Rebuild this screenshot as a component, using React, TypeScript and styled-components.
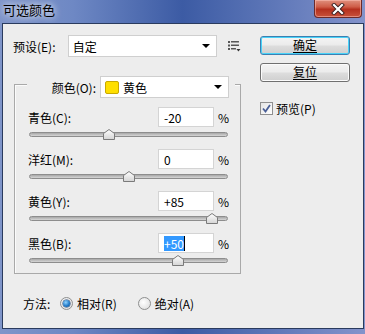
import styled, { createGlobalStyle, css } from 'styled-components';

const GlobalStyle = createGlobalStyle`
  html, body {
    margin: 0;
    padding: 0;
    background: #ffffff;
  }
  body {
    font-family: 'Noto Sans CJK SC', 'Noto Sans', sans-serif;
    font-size: 12px;
    color: #000;
  }
`;

const Window = styled.div`
  width: 365px;
  height: 334px;
  display: flex;
  flex-direction: column;
  background: linear-gradient(90deg, #7f95c9 0%, #6e88c4 20%, #3c5ba4 50%, #5e77b8 75%, #8393cb 100%);
  overflow: hidden;
`;

const TitleBar = styled.div`
  height: 23px;
  display: flex;
  align-items: flex-start;
  justify-content: space-between;
  padding-left: 3px;
  padding-right: 2px;
`;

const Title = styled.div`
  font-size: 13px;
  line-height: 20px;
  color: #000;
  text-shadow: 0 0 6px rgba(255, 255, 255, 0.9), 0 0 10px rgba(255, 255, 255, 0.6);
`;

const CloseButton = styled.div`
  width: 46px;
  height: 17px;
  margin-right: 1px;
  display: flex;
  align-items: center;
  justify-content: center;
  border: 1px solid #6b2a2a;
  border-top: none;
  border-radius: 0 0 4px 4px;
  background: linear-gradient(#e0907e 0%, #cf5d48 40%, #b5301e 55%, #c8523b 100%);
  box-shadow: inset 0 0 0 1px rgba(255, 200, 190, 0.5);
`;

const Frame = styled.div`
  flex: 1;
  padding: 0 1px 5px 2px;
  display: flex;
`;

const Client = styled.div`
  flex: 1;
  border: 1px solid #2a3b5e;
  background: #ededed;
  display: flex;
  padding: 11px 0 0 10px;
`;

const Main = styled.div`
  width: 228px;
  display: flex;
  flex-direction: column;
`;

const PresetRow = styled.div`
  display: flex;
  align-items: center;
  height: 22px;
`;

const PresetLabel = styled.span`
  width: 55px;
`;

const Select = styled.div<{ $width: number }>`
  width: ${(p) => p.$width}px;
  height: 22px;
  box-sizing: border-box;
  background: #fff;
  border: 1px solid #cfcfcf;
  display: flex;
  align-items: center;
  padding: 0 4px 0 4px;
  gap: 2px;
`;

const SelectText = styled.span`
  flex: 1;
`;

const Arrow = styled.span`
  width: 0;
  height: 0;
  border-left: 4px solid transparent;
  border-right: 4px solid transparent;
  border-top: 4px solid #000;
  margin-right: 2px;
`;

const MenuIcon = styled.svg`
  margin-left: 11px;
`;

const Group = styled.div`
  margin: 27px 0 0 1px;
  width: 227px;
  box-sizing: border-box;
  border: 1px solid #a9a9a9;
  box-shadow: inset 1px 1px 0 #fbfbfb;
  padding: 0 11px 0 13px;
`;

const GroupHead = styled.div`
  display: flex;
  align-items: center;
  width: fit-content;
  margin: -9px 0 9px -1px;
  padding-right: 6px;
  background: #ededed;
`;

const HeadLabel = styled.span`
  width: 69px;
  padding-right: 4px;
  text-align: right;
`;

const Swatch = styled.span`
  width: 14px;
  height: 13px;
  box-sizing: border-box;
  background: #ffdf00;
  border: 1px solid #c9a900;
  border-radius: 2px;
  margin-right: 2px;
`;

const InkRow = styled.div`
  display: flex;
  flex-direction: column;
  & + & {
    margin-top: 2px;
  }
`;

const InkLine = styled.div`
  display: grid;
  grid-template-columns: 126px 56px auto;
  column-gap: 4px;
  align-items: center;
  height: 20px;
`;

const Field = styled.div`
  height: 20px;
  box-sizing: border-box;
  background: #fff;
  border: 1px solid #d4d4d4;
  padding-left: 5px;
  display: flex;
  align-items: center;
`;

const Selected = styled.span`
  background: #3399ff;
  color: #fff;
  border-right: 1px solid #000;
  line-height: 15px;
`;

const SliderArea = styled.div`
  height: 20px;
  padding-top: 5px;
  box-sizing: border-box;
`;

const Track = styled.div`
  position: relative;
  margin-left: 1px;
  width: 199px;
  height: 5px;
  box-sizing: border-box;
  border: 1px solid #8d8d8d;
  border-radius: 3px;
  background: linear-gradient(#a7a7a7, #d6d6d6);
`;

const Thumb = styled.svg`
  position: absolute;
  top: -4px;
  margin-left: -6px;
`;

const MethodRow = styled.div`
  display: flex;
  align-items: center;
  height: 16px;
  margin: 21px 0 0 10px;
`;

const MethodLabel = styled.span`
  width: 37px;
`;

const RadioItem = styled.span`
  display: flex;
  align-items: center;
  gap: 4px;
  & + & {
    margin-left: 21px;
  }
`;

const Radio = styled.span<{ $on?: boolean }>`
  width: 13px;
  height: 13px;
  box-sizing: border-box;
  border-radius: 50%;
  border: 1px solid #8e8f8f;
  background: radial-gradient(circle at 40% 40%, #ffffff, #d9d9d9);
  display: flex;
  align-items: center;
  justify-content: center;
  &::after {
    content: '';
    display: ${(p) => (p.$on ? 'block' : 'none')};
    width: 7px;
    height: 7px;
    border-radius: 50%;
    background: radial-gradient(circle at 40% 35%, #8fd3ff, #1b74c4 60%, #0d4d8c);
    box-shadow: 0 0 0 0.5px #1f3f6a;
  }
`;

const Side = styled.div`
  width: 90px;
  margin-left: 19px;
  padding-top: 1px;
  display: flex;
  flex-direction: column;
`;

const Button = styled.div<{ $default?: boolean }>`
  height: 19px;
  box-sizing: border-box;
  border: 1px solid #707070;
  border-radius: 3px;
  background: linear-gradient(#f4f4f4 0%, #ebebeb 48%, #dddddd 52%, #cfcfcf 100%);
  box-shadow: inset 0 0 0 1px #fbfbfb;
  display: flex;
  align-items: center;
  justify-content: center;
  line-height: 14px;
  & + & {
    margin-top: 8px;
  }
  ${(p) =>
    p.$default &&
    css`
      border-color: #3c7fb1;
      box-shadow: inset 0 0 0 1px #48d2f8;
    `}
`;

const ButtonText = styled.span`
  border-bottom: 1px solid #000;
`;

const CheckRow = styled.div`
  display: flex;
  align-items: center;
  gap: 3px;
  margin-top: 18px;
`;

const CheckBox = styled.span`
  width: 13px;
  height: 13px;
  box-sizing: border-box;
  border: 1px solid #8f8f8f;
  background: linear-gradient(135deg, #e4e4e4, #ffffff);
  display: flex;
  align-items: center;
  justify-content: center;
`;

const inks = [
  { label: '青色(C):', value: -20 },
  { label: '洋红(M):', value: 0 },
  { label: '黄色(Y):', value: 85 },
  { label: '黑色(B):', value: 50, selected: true },
];

const fmt = (v: number) => (v > 0 ? `+${v}` : `${v}`);

const App = () => {
  return (
    <Window>
      <GlobalStyle />
      <TitleBar>
        <Title>可选颜色</Title>
        <CloseButton>
          <svg width="14" height="12" viewBox="0 0 14 12">
            <path d="M3 2 L11 10 M11 2 L3 10" stroke="#3a2020" strokeWidth="4" strokeLinecap="square" />
            <path d="M3 2 L11 10 M11 2 L3 10" stroke="#ffffff" strokeWidth="2.2" strokeLinecap="square" />
          </svg>
        </CloseButton>
      </TitleBar>
      <Frame>
        <Client>
          <Main>
            <PresetRow>
              <PresetLabel>预设(E):</PresetLabel>
              <Select $width={150}>
                <SelectText>自定</SelectText>
                <Arrow />
              </Select>
              <MenuIcon width="13" height="12" viewBox="0 0 13 12">
                <rect x="0" y="1" width="2" height="2" fill="#555" />
                <rect x="3" y="1" width="8" height="1.5" fill="#555" />
                <rect x="0" y="4.5" width="2" height="2" fill="#555" />
                <rect x="3" y="4.5" width="8" height="1.5" fill="#555" />
                <rect x="0" y="8" width="2" height="2" fill="#555" />
                <rect x="3" y="8" width="5" height="1.5" fill="#555" />
                <path d="M8.5 9 L12.5 9 L10.5 11.5 Z" fill="#333" />
              </MenuIcon>
            </PresetRow>
            <Group>
              <GroupHead>
                <HeadLabel>颜色(O):</HeadLabel>
                <Select $width={129}>
                  <Swatch />
                  <SelectText>黄色</SelectText>
                  <Arrow />
                </Select>
              </GroupHead>
              {inks.map((ink) => (
                <InkRow key={ink.label}>
                  <InkLine>
                    <span>{ink.label}</span>
                    <Field>
                      {ink.selected ? <Selected>{fmt(ink.value)}</Selected> : fmt(ink.value)}
                    </Field>
                    <span>%</span>
                  </InkLine>
                  <SliderArea>
                    <Track>
                      <Thumb
                        width="12"
                        height="11"
                        viewBox="0 0 12 11"
                        style={{ left: `${((ink.value + 100) / 200) * 197}px` }}
                      >
                        <defs>
                          <linearGradient id="thumbFill" x1="0" y1="0" x2="0" y2="1">
                            <stop offset="0" stopColor="#ffffff" />
                            <stop offset="1" stopColor="#d4d4d4" />
                          </linearGradient>
                        </defs>
                        <path
                          d="M6 0.5 L11.5 4.5 L11.5 10.5 L0.5 10.5 L0.5 4.5 Z"
                          fill="url(#thumbFill)"
                          stroke="#7a7a7a"
                          strokeWidth="1"
                        />
                      </Thumb>
                    </Track>
                  </SliderArea>
                </InkRow>
              ))}
            </Group>
            <MethodRow>
              <MethodLabel>方法:</MethodLabel>
              <RadioItem>
                <Radio $on />
                相对(R)
              </RadioItem>
              <RadioItem>
                <Radio />
                绝对(A)
              </RadioItem>
            </MethodRow>
          </Main>
          <Side>
            <Button $default>
              <ButtonText>确定</ButtonText>
            </Button>
            <Button>
              <ButtonText>复位</ButtonText>
            </Button>
            <CheckRow>
              <CheckBox>
                <svg width="9" height="9" viewBox="0 0 9 9">
                  <path d="M1 4.5 L3.5 7.5 L8 1" fill="none" stroke="#4a5f97" strokeWidth="1.8" />
                </svg>
              </CheckBox>
              预览(P)
            </CheckRow>
          </Side>
        </Client>
      </Frame>
    </Window>
  );
};

export default App;
